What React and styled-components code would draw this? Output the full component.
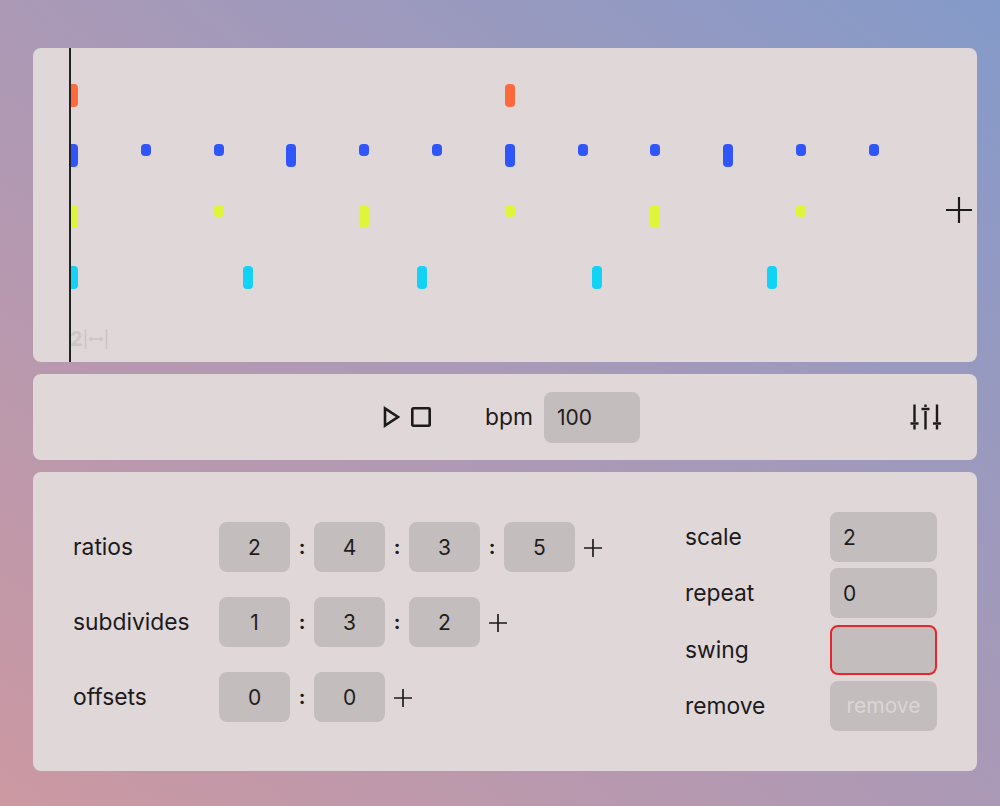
import React from 'react'
import styled, { createGlobalStyle } from 'styled-components'

const GlobalStyle = createGlobalStyle`
  html, body { margin: 0; padding: 0; height: 100%; }
  body {
    background: linear-gradient(to top right, #cc98a2, #ab99b6 50%, #849ac9);
    font-family: Inter, "Liberation Sans", sans-serif;
    color: #1c1a1a;
  }
`

const Page = styled.div`
  box-sizing: border-box;
  height: 806px;
  padding: 48px 23px 0 33px;
  display: flex;
  flex-direction: column;
  gap: 12px;
`

const Panel = styled.section`
  background: #e0d7d8;
  border-radius: 8px;
`

const TimelinePanel = styled(Panel)`
  height: 314px;
  position: relative;
  padding-left: 36px;
  box-sizing: border-box;
`

const Track = styled.div`
  position: relative;
  height: 100%;
  width: 880px;
  overflow: hidden;
  border-left: 2px solid #222;
`

const Note = styled.div`
  position: absolute;
  width: 10px;
  top: ${p => p.$top}px;
  height: ${p => (p.$small ? 12 : 23)}px;
  background: ${p => p.$color};
  border-radius: 4px;
`

const Hint = styled.div`
  position: absolute;
  left: -1px;
  bottom: 11px;
  display: flex;
  align-items: center;
  gap: 1px;
  font-size: 20px;
  line-height: 24px;
  font-weight: 700;
  color: #cbc6c6;
`

const AddTrack = styled.button`
  position: absolute;
  right: 5px;
  top: 149px;
  width: 26px;
  height: 26px;
  padding: 0;
  border: none;
  background: none;
  display: block;
`

const Transport = styled(Panel)`
  height: 86px;
  box-sizing: border-box;
  padding: 0 35px 0 48px;
  display: grid;
  grid-template-columns: 1fr auto 1fr;
  align-items: center;
`

const TransportCenter = styled.div`
  grid-column: 2;
  display: flex;
  align-items: center;
`

const IconButton = styled.button`
  padding: 0;
  border: none;
  background: none;
  display: flex;
  margin-right: ${p => p.$gap || 0}px;
`

const MixerButton = styled(IconButton)`
  grid-column: 3;
  justify-self: end;
`

const Label = styled.span`
  font-size: 22.8px;
  line-height: 30px;
`

const Field = styled.div`
  box-sizing: border-box;
  width: ${p => p.$width}px;
  height: ${p => p.$height || 50}px;
  background: #c4bdbd;
  border-radius: 8px;
  border: ${p => (p.$error ? '2px solid #e8252b' : 'none')};
  display: flex;
  align-items: center;
  justify-content: ${p => (p.$center ? 'center' : 'flex-start')};
  padding-left: ${p => (p.$center ? 0 : 13)}px;
  font-size: 21px;
  color: #1f1d1d;
`

const BpmLabel = styled(Label)`
  margin-right: 11px;
`

const Editor = styled(Panel)`
  height: 299px;
  box-sizing: border-box;
  padding: 40px 40px 0 40px;
  display: flex;
  justify-content: space-between;
`

const Sequences = styled.div`
  padding-top: 10px;
  display: flex;
  flex-direction: column;
  gap: 25px;
`

const SeqRow = styled.div`
  display: flex;
  align-items: center;
`

const SeqLabel = styled(Label)`
  width: 146px;
`

const Colon = styled.span`
  width: 24px;
  text-align: center;
  font-size: 20px;
  font-weight: 700;
`

const PlusButton = styled.button`
  margin: 2px 0 0 9px;
  padding: 0;
  border: none;
  background: none;
  display: flex;
`

const Settings = styled.div`
  display: grid;
  grid-template-columns: 145px 107px;
  grid-auto-rows: 50px;
  row-gap: 6.3px;
  align-items: center;
`

const RemoveButton = styled.button`
  width: 107px;
  height: 50px;
  border: none;
  border-radius: 8px;
  background: #c4bdbd;
  color: #dcd5d5;
  font-family: inherit;
  font-size: 21px;
  padding: 0;
`

const TRACK_LEN = 873.6

const tracks = [
  { color: '#ff6a3d', top: 36, steps: 2, every: 1 },
  { color: '#2f55fb', top: 96, steps: 12, every: 3 },
  { color: '#dff53a', top: 157, steps: 6, every: 2 },
  { color: '#12d3f5', top: 218, steps: 5, every: 1 },
]

const sequences = [
  { name: 'ratios', values: [2, 4, 3, 5] },
  { name: 'subdivides', values: [1, 3, 2] },
  { name: 'offsets', values: [0, 0] },
]

function Plus({ size, weight }) {
  return (
    <svg width={size} height={size} viewBox="0 0 24 24" fill="none" stroke="#1c1a1a" strokeWidth={weight}>
      <path d="M12 0V24M0 12H24" />
    </svg>
  )
}

function Sliders() {
  return (
    <svg width="32" height="26" viewBox="0 0 32 26" fill="none" stroke="#1c1a1a" strokeWidth="2.4">
      <path d="M4.5 0.5V18M0.5 19.5H8.5M4.5 21V25.5" />
      <path d="M15.5 0.5V3M11.5 5H19.5M15.5 7V25.5" />
      <path d="M27 0.5V18M23 19.5H31M27 21V25.5" />
    </svg>
  )
}

export default function App() {
  return (
    <Page>
      <GlobalStyle />
      <TimelinePanel>
        <Track>
          {tracks.map(t =>
            Array.from({ length: t.steps }, (_, i) => (
              <Note
                key={t.color + i}
                $color={t.color}
                $top={t.top}
                $small={i % t.every !== 0}
                style={{ left: i * (TRACK_LEN / t.steps) - 3 }}
              />
            ))
          )}
          <Hint>
            2
            <svg width="24" height="22" viewBox="0 0 24 22" fill="none" stroke="#cbc6c6" strokeWidth="1.6">
              <path d="M1.5 1V21M22.5 1V21M6 11H18M8 9L5.5 11L8 13M16 9L18.5 11L16 13" />
            </svg>
          </Hint>
        </Track>
        <AddTrack><Plus size={26} weight={2} /></AddTrack>
      </TimelinePanel>

      <Transport>
        <TransportCenter>
          <IconButton $gap={11}>
            <svg width="17" height="22" viewBox="0 0 17 22" fill="none" stroke="#1c1a1a" strokeWidth="2.6">
              <path d="M2 2.5V19.5L15 11Z" />
            </svg>
          </IconButton>
          <IconButton $gap={54}>
            <svg width="20" height="20" viewBox="0 0 20 20" fill="none" stroke="#1c1a1a" strokeWidth="2.6">
              <rect x="1.3" y="1.3" width="17.4" height="17.4" rx="1" />
            </svg>
          </IconButton>
          <BpmLabel>bpm</BpmLabel>
          <Field $width={96} $height={51}>100</Field>
        </TransportCenter>
        <MixerButton><Sliders /></MixerButton>
      </Transport>

      <Editor>
        <Sequences>
          {sequences.map(s => (
            <SeqRow key={s.name}>
              <SeqLabel>{s.name}</SeqLabel>
              {s.values.map((v, i) => (
                <React.Fragment key={i}>
                  {i > 0 && <Colon>:</Colon>}
                  <Field $width={71} $center>{v}</Field>
                </React.Fragment>
              ))}
              <PlusButton><Plus size={18} weight={2.2} /></PlusButton>
            </SeqRow>
          ))}
        </Sequences>
        <Settings>
          <Label>scale</Label>
          <Field $width={107}>2</Field>
          <Label>repeat</Label>
          <Field $width={107}>0</Field>
          <Label>swing</Label>
          <Field $width={107} $error />
          <Label>remove</Label>
          <RemoveButton>remove</RemoveButton>
        </Settings>
      </Editor>
    </Page>
  )
}
